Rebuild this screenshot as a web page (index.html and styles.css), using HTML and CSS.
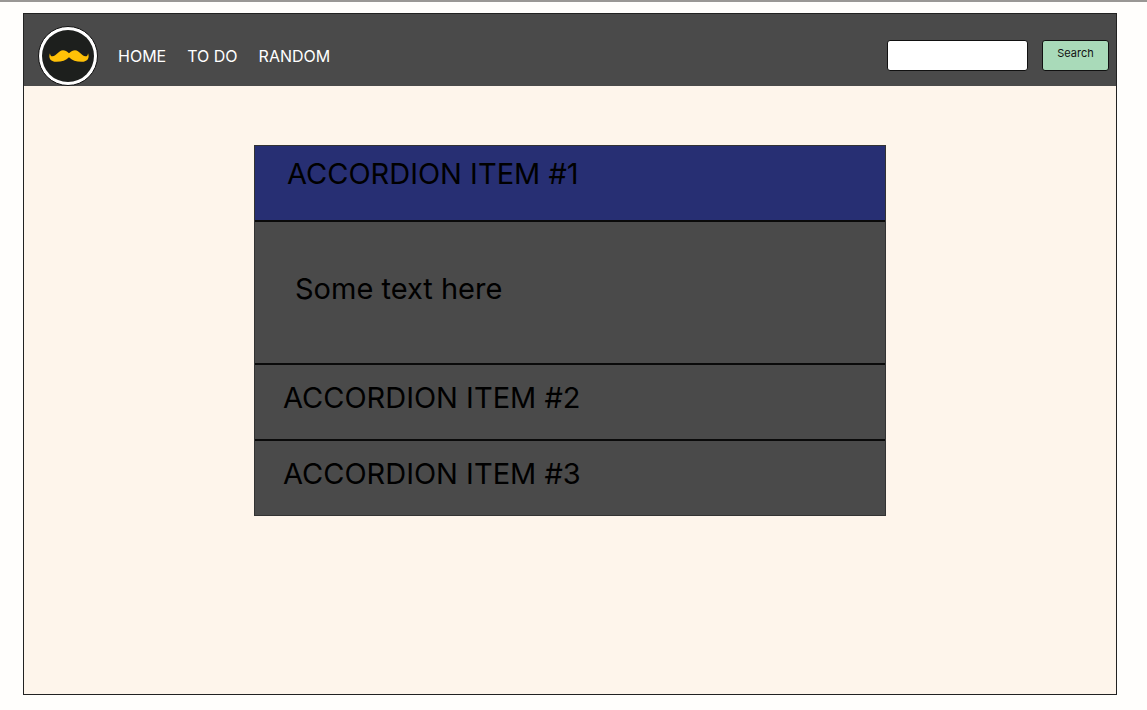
FILE: index.html
```html
<!DOCTYPE html>
<html lang="en">
<head>
<meta charset="utf-8">
<meta name="viewport" content="width=device-width, initial-scale=1">
<title>Accordion</title>
<link rel="stylesheet" href="styles.css">
</head>
<body>
<div class="frame">
  <header class="header">
    <a class="logo" href="#" aria-label="Home page">
      <svg viewBox="0 0 60 60" aria-hidden="true">
        <circle cx="30" cy="30" r="29.5" fill="#fff" stroke="#111" stroke-width="1"/>
        <circle cx="30" cy="30" r="26" fill="#1d1f1d"/>
        <path fill="#ffc107" d="M31 27.300C33 25.300 35 24.300 37 24.300C41.500 24.300 43.500 30.300 47.500 30.300C49.200 30.300 49.900 29.200 50 27.200C51.800 31.500 50 35.800 43.500 35.800C38 35.800 34 34.500 31 31.200C28 34.500 24 35.800 18.500 35.800C12 35.800 10.200 31.500 12 27.200C12.100 29.200 12.800 30.300 14.500 30.300C18.500 30.300 20.500 24.300 25 24.300C27 24.300 29 25.300 31 27.300Z"/>
      </svg>
    </a>
    <nav class="nav">
      <a href="#">HOME</a>
      <a href="#">TO DO</a>
      <a href="#">RANDOM</a>
    </nav>
    <form class="search" role="search">
      <input class="search-input" type="search" aria-label="Search text">
      <button class="search-button" type="button">Search</button>
    </form>
  </header>
  <main class="main">
    <div class="accordion">
      <h2 class="item"><button class="toggle toggle-open" type="button" aria-expanded="true" aria-controls="panel-1">ACCORDION ITEM #1</button></h2>
      <div class="panel" id="panel-1">Some text here</div>
      <h2 class="item"><button class="toggle" type="button" aria-expanded="false">ACCORDION ITEM #2</button></h2>
      <h2 class="item"><button class="toggle" type="button" aria-expanded="false">ACCORDION ITEM #3</button></h2>
    </div>
  </main>
</div>
</body>
</html>
```
FILE: styles.css
```css
* {
  box-sizing: border-box;
}

body {
  margin: 0;
  min-height: 100vh;
  display: flex;
  flex-direction: column;
  padding: 11px 30px 15px 23px;
  border-top: 2px solid #999795;
  background: #fffefc;
  color: #000;
  font-family: Inter, "Liberation Sans", sans-serif;
}

.frame {
  flex: 1;
  border: 1px solid #222;
  background: #fef5eb;
}

.header {
  display: flex;
  padding: 12px 7px 0 14px;
  background: #4a4a4a;
}

.logo,
.logo svg {
  display: block;
  width: 60px;
  height: 60px;
}

.nav {
  display: flex;
  align-items: center;
  gap: 21px;
  padding-left: 20px;
  font-size: 16px;
  line-height: 20px;
}

.nav a {
  color: #fff;
  text-decoration: none;
}

.search {
  display: flex;
  align-items: center;
  gap: 14px;
  margin-left: auto;
  padding-bottom: 2px;
}

.search-input,
.search-button {
  height: 31px;
  margin: 0;
  border: 1px solid #111;
  border-radius: 3px;
  font: 11px/14px Inter, "Liberation Sans", sans-serif;
}

.search-input {
  width: 141px;
  padding: 0 8px;
  background: #fff;
}

.search-button {
  width: 67px;
  padding: 0 0 4px;
  background: #a9dab9;
  color: #111;
}

.main {
  padding: 59px 24px;
}

.accordion {
  max-width: 632px;
  margin: 0 auto;
  border: 1px solid #333;
  background: #4a4a4a;
  font-size: 29px;
  line-height: 36px;
}

.item {
  margin: 0;
  font: inherit;
}

.item + .panel,
.panel + .item,
.item + .item {
  border-top: 2px solid #0a0a0a;
}

.toggle {
  display: block;
  width: 100%;
  padding: 15px 28px 23px;
  border: 0;
  background: transparent;
  color: #000;
  font: inherit;
  text-align: left;
}

.toggle-open {
  padding: 10px 32px 28px;
  background: #272f73;
}

.panel {
  padding: 49px 40px 56px;
}
```
